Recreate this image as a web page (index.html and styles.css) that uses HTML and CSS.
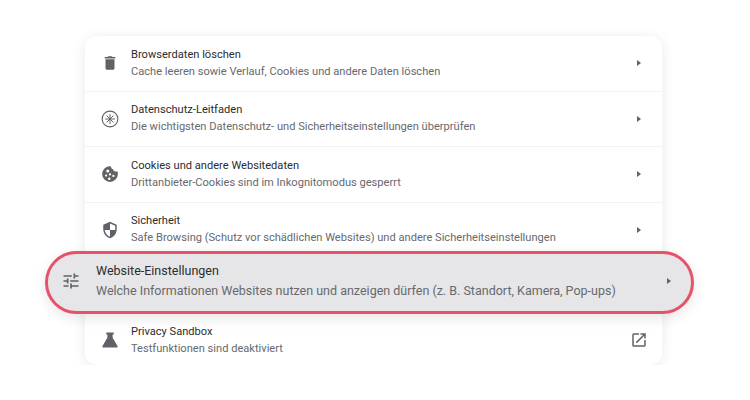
FILE: index.html
```html
<!DOCTYPE html>
<html lang="de">
<head>
    <meta charset="UTF-8">
    <meta name="viewport" content="width=device-width, initial-scale=1.0">
    <title>Datenschutz und Sicherheit</title>
    <link rel="stylesheet" href="styles.css">
</head>
<body>

    <div class="settings-card">
        <div class="row">
            <svg class="icon" viewBox="0 0 24 24"><path d="M6 19c0 1.100.9 2 2 2h8c1.100 0 2-.9 2-2V7H6v12zM19 4h-3.500l-1-1h-5l-1 1H5v2h14V4z"/></svg>
            <div class="row-text">
                <div class="row-title">Browserdaten löschen</div>
                <div class="row-sub">Cache leeren sowie Verlauf, Cookies und andere Daten löschen</div>
            </div>
            <span class="caret"></span>
        </div>

        <div class="row">
            <svg class="icon" viewBox="0 0 24 24"><circle cx="12" cy="12" r="10.500" fill="none" stroke="#5f6368" stroke-width="1.500"/><path class="star" d="M12 5.500v13M5.500 12h13M7.400 7.400l9.200 9.200M16.600 7.400l-9.200 9.200"/></svg>
            <div class="row-text">
                <div class="row-title">Datenschutz-Leitfaden</div>
                <div class="row-sub">Die wichtigsten Datenschutz- und Sicherheitseinstellungen überprüfen</div>
            </div>
            <span class="caret"></span>
        </div>

        <div class="row">
            <svg class="icon" viewBox="0 0 24 24"><path fill-rule="evenodd" d="M12 1.500c1 0 1.500.3 1.500 1.300 0 1.700 1 3 2.700 3 .3 1.900 1.500 3 3.300 3 .5 0 1.500-.2 2.700.3.300 1 .3 1.900.3 2.900A10.500 10.500 0 1 1 12 1.500zM9 6a2 2 0 1 0 0 4 2 2 0 0 0 0-4zM6.800 12.500a1.500 1.500 0 1 0 0 3 1.500 1.500 0 0 0 0-3zM12 11a1.500 1.500 0 1 0 0 3 1.500 1.500 0 0 0 0-3zM16.500 13a1.500 1.500 0 1 0 0 3 1.500 1.500 0 0 0 0-3zM11 16.500a1.700 1.700 0 1 0 0 3.400 1.700 1.700 0 0 0 0-3.400z"/></svg>
            <div class="row-text">
                <div class="row-title">Cookies und andere Websitedaten</div>
                <div class="row-sub">Drittanbieter-Cookies sind im Inkognitomodus gesperrt</div>
            </div>
            <span class="caret"></span>
        </div>

        <div class="row row-cut">
            <svg class="icon" viewBox="0 0 24 24"><path transform="matrix(-1 0 0 1 24 0)" d="M12 1L3 5v6c0 5.550 3.840 10.740 9 12 5.160-1.260 9-6.450 9-12V5l-9-4zm0 10.990h7c-.53 4.120-3.280 7.790-7 8.940V12H5V6.300l7-3.110v8.800z"/></svg>
            <div class="row-text">
                <div class="row-title">Sicherheit</div>
                <div class="row-sub">Safe Browsing (Schutz vor schädlichen Websites) und andere Sicherheitseinstellungen</div>
            </div>
            <span class="caret"></span>
        </div>

        <div class="row-highlight">
            <svg class="icon" viewBox="0 0 24 24"><path d="M3 17v2h6v-2H3zM3 5v2h10V5H3zm10 16v-2h8v-2h-8v-2h-2v6h2zM7 9v2H3v2h4v2h2V9H7zm14 4v-2H11v2h10zm-6-4h2V7h4V5h-4V3h-2v6z"/></svg>
            <div class="row-text">
                <div class="row-title">Website-Einstellungen</div>
                <div class="row-sub">Welche Informationen Websites nutzen und anzeigen dürfen (z. B. Standort, Kamera, Pop-ups)</div>
            </div>
            <span class="caret"></span>
        </div>

        <div class="row row-last">
            <svg class="icon" viewBox="0 0 24 24"><path d="M7 2h10v2.500h-1.500V9L22 20c.6 1.200-.1 2-1.200 2H3.200c-1.100 0-1.800-.8-1.200-2L8.500 9V4.500H7z"/></svg>
            <div class="row-text">
                <div class="row-title">Privacy Sandbox</div>
                <div class="row-sub">Testfunktionen sind deaktiviert</div>
            </div>
            <svg class="icon-link" viewBox="0 0 24 24"><path d="M19 19H5V5h7V3H5a2 2 0 0 0-2 2v14a2 2 0 0 0 2 2h14c1.100 0 2-.9 2-2v-7h-2v7zM14 3v2h3.590l-9.830 9.830 1.410 1.410L19 6.410V10h2V3h-7z"/></svg>
        </div>
    </div>

</body>
</html>
```

FILE: styles.css
```css
body {
    font-family: Roboto, "Liberation Sans", sans-serif;
    background-color: #fff;
    margin: 0;
    padding: 36px 88px 0 85px;
    overflow: hidden;
}

.settings-card {
    background-color: #fff;
    border-radius: 12px;
    box-shadow: 0 2px 14px rgba(0, 0, 0, 0.09);
    display: flex;
    flex-direction: column;
}

.row {
    display: flex;
    align-items: center;
    height: 54.5px;
    padding: 0 21px 0 15.5px;
    border-bottom: 1px solid #f3f3f3;
}

.row-cut {
    height: 48.5px;
    align-items: flex-start;
    border-bottom: none;
}

.row-cut .icon {
    margin-top: 18px;
}

.row-cut .row-text {
    margin-top: 11px;
}

.row-cut .caret {
    margin-top: 24px;
}

.row-last {
    height: 51px;
    border-bottom: none;
    padding-right: 14.5px;
}

.row-last .row-text {
    padding-top: 2px;
}

.icon {
    width: 18px;
    height: 18px;
    fill: #5f6368;
    flex-shrink: 0;
    margin-right: 12.5px;
}

.star {
    fill: none;
    stroke: #5f6368;
    stroke-width: 1.300;
}

.row-text {
    flex: 1;
}

.row-title {
    font-size: 11.1px;
    line-height: 14px;
    color: #2b2c2e;
    margin-bottom: 3px;
}

.row-sub {
    font-size: 11.1px;
    line-height: 14px;
    color: #66696d;
}

.caret {
    width: 0;
    height: 0;
    border-left: 4px solid #5f6368;
    border-top: 3.500px solid transparent;
    border-bottom: 3.500px solid transparent;
}

.row-last .icon-link {
    width: 18px;
    height: 18px;
    fill: #5f6368;
}

.row-highlight {
    display: flex;
    align-items: center;
    height: 54px;
    margin: 0 -32px 0 -40px;
    padding: 0 20px 3px 12.5px;
    background-color: #e6e6e8;
    border: 3px solid #e5536b;
    border-radius: 32px;
    box-shadow: 0 4px 14px rgba(0, 0, 0, 0.1);
    position: relative;
}

.row-highlight .icon {
    width: 20px;
    height: 20px;
    margin-right: 15.5px;
}

.row-highlight .row-title {
    font-size: 12.5px;
    line-height: 16px;
    margin-bottom: 4px;
}

.row-highlight .row-sub {
    font-size: 12.5px;
    line-height: 16px;
}
```
